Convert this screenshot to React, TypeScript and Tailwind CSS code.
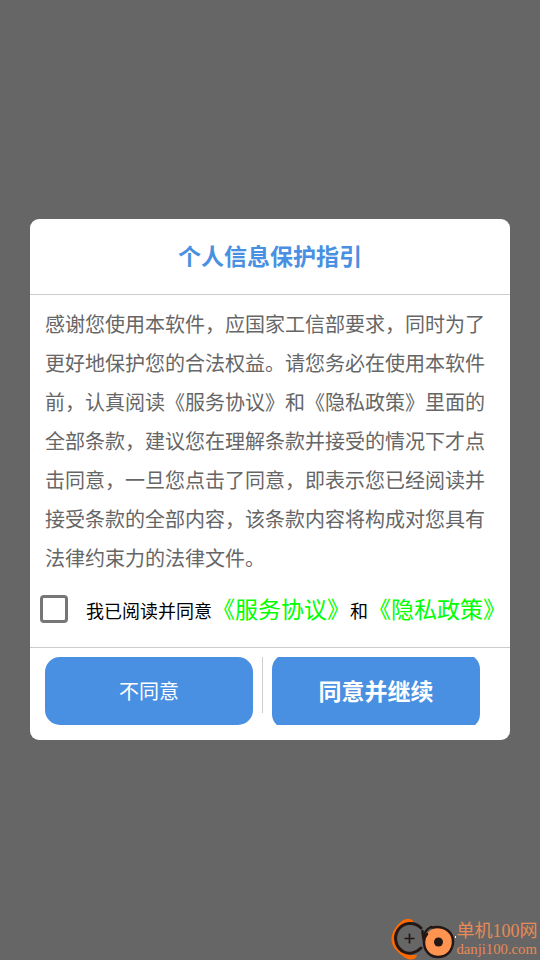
const POLICY_LINES = [
  "感谢您使用本软件，应国家工信部要求，同时为了",
  "更好地保护您的合法权益。请您务必在使用本软件",
  "前，认真阅读《服务协议》和《隐私政策》里面的",
  "全部条款，建议您在理解条款并接受的情况下才点",
  "击同意，一旦您点击了同意，即表示您已经阅读并",
  "接受条款的全部内容，该条款内容将构成对您具有",
  "法律约束力的法律文件。",
];

function Agreement() {
  return (
    <label className="flex h-[64px] shrink-0 pl-[10px] pt-[10px]">
      <input
        type="checkbox"
        className="mt-[2px] h-[28px] w-[28px] shrink-0 appearance-none rounded-[4px] border-3 border-[#777777]"
      />
      <span className="ml-[18px] whitespace-nowrap text-[18px] leading-[30px] text-black">
        我已阅读并同意
        <a className="text-[23px] text-[#00ff00]">《服务协议》</a>
        和
        <a className="text-[23px] text-[#00ff00]">《隐私政策》</a>
      </span>
    </label>
  );
}

function Watermark() {
  return (
    <div className="absolute bottom-0 right-0 flex h-[46px] w-[152px] font-['Liberation_Serif','Noto_Sans_CJK_SC',serif] text-[#e88a55]">
      <svg className="h-[46px] w-[68px] shrink-0" viewBox="0 0 68 46" fill="none">
        <path d="M25 7C21 2.500 15 5 10 10.500C1.500 19.500 1.500 30 9 37C13 41 18 45 22 45.500C26 46 28.500 44 29 41C20 42 12 38 8.500 31C4 22 10 10 25 8Z" fill="#ff6a00" />
        <path d="M33 14C26 7 15 8.500 10 16C5 24 8 34 16 38C22 41 29 38 33 34" stroke="#231815" strokeWidth="3" strokeLinecap="round" />
        <path d="M16.500 24.500H26.500M21.500 19.500V29.500" stroke="#231815" strokeWidth="1.700" />
        <path d="M34.500 17C34.500 22 35.500 25 37 31M43 13C39 15 36.500 18 36 22" stroke="#231815" strokeWidth="2.500" strokeLinecap="round" />
        <circle cx="50.500" cy="28" r="14" fill="#ff9350" />
        <path d="M44 13.500C57 11 66 19 65 29C64 38 58 43 50 43C42 43 36 37 36 28C36 25 37 22 39 20" stroke="#231815" strokeWidth="2.500" strokeLinecap="round" />
        <circle cx="50.500" cy="28" r="4.500" fill="#231815" />
        <rect x="67" y="22" width="1" height="2" fill="#ffffff" />
      </svg>
      <div className="whitespace-nowrap pl-[0.500px] pt-[6px]">
        <p className="text-[18px] leading-[22px]">单机100网</p>
        <p className="text-[14.700px] leading-[15px]">danji100.com</p>
      </div>
    </div>
  );
}

export default function App() {
  return (
    <div className="relative flex h-[960px] w-[540px] flex-col overflow-hidden bg-[#666666] px-[30px] pt-[219px] font-['Noto_Sans_CJK_SC',sans-serif]">
      <div className="flex h-[521px] shrink-0 flex-col rounded-[9px] bg-white">
        <h1 className="flex h-[75px] shrink-0 items-center justify-center pb-[2px] text-[23px] font-bold text-[#4990e2]">
          个人信息保护指引
        </h1>
        <div className="h-px shrink-0 bg-[#cccccc]" />
        <div className="h-[288px] shrink-0 whitespace-nowrap pl-[15px] pt-[9px] text-[20px] leading-[39px] text-[#666666]">
          {POLICY_LINES.map((line) => (
            <p key={line}>{line}</p>
          ))}
        </div>
        <Agreement />
        <div className="h-px shrink-0 bg-[#cccccc]" />
        <div className="flex pl-[15px] pt-[9px]">
          <button className="h-[68px] w-[208px] rounded-[15px] bg-[#4990e2] text-[20px] text-white">不同意</button>
          <div className="ml-[9px] mr-[9px] h-[56px] w-px bg-[#cccccc]" />
          {/* taller pill clipped by its row */}
          <div className="flex h-[68px] w-[208px] items-center overflow-hidden">
            <button className="h-[75px] w-full shrink-0 rounded-[15px] bg-[#4990e2] pb-[2px] text-[23px] font-bold text-white">
              同意并继续
            </button>
          </div>
        </div>
      </div>
      <Watermark />
    </div>
  );
}
